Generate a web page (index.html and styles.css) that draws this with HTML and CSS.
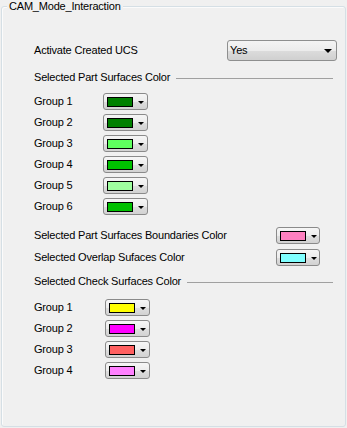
FILE: index.html
```html
<!DOCTYPE html>
<html>
<head>
<meta charset="utf-8">
<link rel="stylesheet" href="styles.css">
</head>
<body>
<div class="frame">
  <div class="title">CAM_Mode_Interaction</div>
  <div class="content">
    <div class="row activate">
      <span class="label">Activate Created UCS</span>
      <div class="combo"><span>Yes</span><i class="combo-arrow"></i></div>
    </div>

    <div class="section part-head"><span>Selected Part Surfaces Color</span><div class="sep"></div></div>
    <div class="groups part-groups">
      <span class="label">Group 1</span><div class="cbtn"><i class="sw" style="background:#008000"></i><i class="arr"></i></div>
      <span class="label">Group 2</span><div class="cbtn"><i class="sw" style="background:#008000"></i><i class="arr"></i></div>
      <span class="label">Group 3</span><div class="cbtn"><i class="sw" style="background:#5fff5f"></i><i class="arr"></i></div>
      <span class="label">Group 4</span><div class="cbtn"><i class="sw" style="background:#00c000"></i><i class="arr"></i></div>
      <span class="label">Group 5</span><div class="cbtn"><i class="sw" style="background:#9fff9f"></i><i class="arr"></i></div>
      <span class="label">Group 6</span><div class="cbtn"><i class="sw" style="background:#00c000"></i><i class="arr"></i></div>
    </div>

    <div class="groups extra">
      <span class="label">Selected Part Surfaces Boundaries Color</span><div class="cbtn narrow"><i class="sw" style="background:#ff80c0"></i><i class="arr"></i></div>
      <span class="label">Selected Overlap Sufaces Color</span><div class="cbtn narrow"><i class="sw" style="background:#80ffff"></i><i class="arr"></i></div>
    </div>

    <div class="section check-head"><span>Selected Check Surfaces Color</span><div class="sep"></div></div>
    <div class="groups check-groups">
      <span class="label">Group 1</span><div class="cbtn"><i class="sw" style="background:#ffff00"></i><i class="arr"></i></div>
      <span class="label">Group 2</span><div class="cbtn"><i class="sw" style="background:#ff00ff"></i><i class="arr"></i></div>
      <span class="label">Group 3</span><div class="cbtn"><i class="sw" style="background:#ff6060"></i><i class="arr"></i></div>
      <span class="label">Group 4</span><div class="cbtn"><i class="sw" style="background:#ff80ff"></i><i class="arr"></i></div>
    </div>
  </div>
</div>
</body>
</html>
```
FILE: styles.css
```css
* { box-sizing: border-box; }
html, body {
  margin: 0;
  padding: 0;
  background: #f0f0f0;
  width: 347px;
  height: 428px;
  overflow: hidden;
}
body {
  font-family: "Liberation Sans", Arial, sans-serif;
  font-size: 11px;
  letter-spacing: -0.2px;
  color: #000;
  line-height: 13px;
}
.frame {
  position: relative;
  margin: 6px 1px 0 1px;
  height: 421px;
  border: 1px solid #d5dfe5;
  border-radius: 3px;
  box-shadow: inset 1px 1px 0 #fbfbfb;
}
.title {
  position: absolute;
  top: -7px;
  left: 5px;
  padding: 0 2px 0 2px;
  background: #f0f0f0;
  white-space: nowrap;
}
.content {
  padding: 33px 8px 0 32px;
  display: flex;
  flex-direction: column;
}
.row {
  display: flex;
  align-items: center;
  justify-content: space-between;
}
.activate { height: 21px; }
.label { white-space: nowrap; }
.combo {
  width: 110px;
  height: 21px;
  border: 1px solid #8e8f8f;
  border-radius: 3px;
  background: linear-gradient(#f4f4f4, #ececec 50%, #dcdcdc 51%, #d0d0d0);
  display: flex;
  align-items: center;
  justify-content: space-between;
  padding: 0 3px 0 2px;
}
.combo span { margin-top: -1px; }
.combo-arrow {
  width: 0; height: 0;
  border-left: 4px solid transparent;
  border-right: 4px solid transparent;
  border-top: 4px solid #000;
  margin-right: 1px;
}
.section {
  display: flex;
  align-items: center;
  height: 13px;
  margin-top: 10px;
}
.sep {
  flex: 1;
  height: 1px;
  background: #a0a0a0;
  margin: 1px 4px 0 6px;
}
.groups {
  display: grid;
  grid-template-columns: 69px auto;
  grid-auto-rows: 17px;
  row-gap: 4px;
  align-items: center;
  justify-items: start;
}
.groups .label { margin-top: -1px; }
.part-groups { margin-top: 9px; }
.extra {
  margin-top: 12px;
  grid-template-columns: 242px auto;
  row-gap: 5px;
}
.check-head { margin-top: 9px; }
.check-groups {
  margin-top: 11px;
  grid-template-columns: 71px auto;
}
.cbtn {
  width: 45px;
  height: 17px;
  border: 1px solid #8a8a8a;
  border-radius: 3px;
  background: linear-gradient(#f6f6f6, #ececec 50%, #dedede 51%, #d2d2d2);
  display: flex;
  align-items: center;
  padding-left: 3px;
}
.cbtn.narrow { width: 44px; }
.sw {
  display: block;
  width: 26px;
  height: 10px;
  border: 1px solid #000;
  margin-top: 1px;
}
.arr {
  display: block;
  width: 0; height: 0;
  border-left: 3px solid transparent;
  border-right: 3px solid transparent;
  border-top: 3px solid #000;
  margin-left: 5px;
  margin-top: 2px;
}
```
